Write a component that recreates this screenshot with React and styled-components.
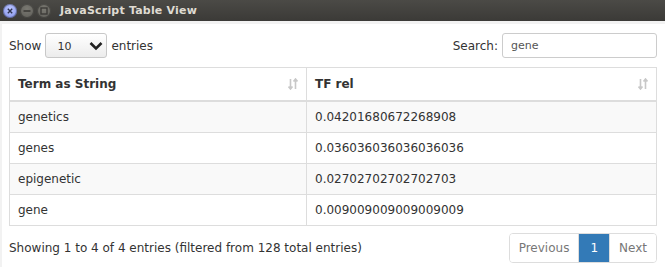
import React from "react";
import styled, { createGlobalStyle } from "styled-components";

const GlobalStyle = createGlobalStyle`
  body {
    margin: 0;
    background: #fff;
    font-family: "DejaVu Sans", "Liberation Sans", sans-serif;
  }
`;

const rows = [
  ["genetics", "0.04201680672268908"],
  ["genes", "0.036036036036036036"],
  ["epigenetic", "0.02702702702702703"],
  ["gene", "0.009009009009009009"],
];

const Window = styled.div`
  width: 665px;
  height: 267px;
  display: flex;
  flex-direction: column;
  overflow: hidden;
`;

const TitleBar = styled.div`
  height: 21px;
  flex-shrink: 0;
  display: flex;
  align-items: center;
  padding-left: 3px;
  gap: 3px;
  background: linear-gradient(#4b4a46, #3b3a37);
`;

const WinButton = styled.span`
  width: 14px;
  height: 14px;
  border-radius: 50%;
  display: flex;
  align-items: center;
  justify-content: center;
  background: ${(p) =>
    p.$close
      ? "radial-gradient(circle at 50% 35%, #bcc6ff, #7d8ce6)"
      : "radial-gradient(circle at 50% 35%, #7a7972, #5c5b56)"};
  box-shadow: inset 0 0 0 1px rgba(0, 0, 0, 0.3);
`;

const Title = styled.span`
  margin-left: 6px;
  color: #dfdbd2;
  font-weight: bold;
  font-size: 11px;
  letter-spacing: 0.2px;
`;

const Content = styled.div`
  flex: 1;
  border-top: 3px solid #f2f2f2;
  border-left: 2px solid #f2f2f2;
  padding: 9px 8px 0 7px;
  color: #333;
  font-size: 12px;
`;

const TopBar = styled.div`
  display: flex;
  justify-content: space-between;
  align-items: center;
  height: 25px;
`;

const Label = styled.label`
  display: flex;
  align-items: center;
  gap: 4px;
`;

const Select = styled.div`
  box-sizing: border-box;
  width: 62px;
  height: 25px;
  border: 1px solid #c8c8c8;
  border-radius: 3px;
  background: linear-gradient(#fff, #ececec);
  display: flex;
  align-items: center;
  justify-content: space-between;
  padding: 1px 3px 0 11px;
  font-size: 11px;
`;

const Input = styled.div`
  width: 155px;
  height: 25px;
  box-sizing: border-box;
  border: 1px solid #ccc;
  border-radius: 3px;
  padding: 0 8px;
  display: flex;
  align-items: center;
  font-size: 11px;
  color: #555;
`;

const Table = styled.table`
  width: 100%;
  margin-top: 9px;
  border-collapse: collapse;
  table-layout: fixed;
  border: 1px solid #ddd;
`;

const Th = styled.th`
  text-align: left;
  font-weight: bold;
  padding: 8px 8px;
  line-height: 16px;
  border: 1px solid #ddd;
  border-bottom: 2px solid #ddd;
`;

const ThInner = styled.div`
  display: flex;
  justify-content: space-between;
  align-items: center;
`;

const Td = styled.td`
  padding: 8px 8px;
  line-height: 14px;
  border: 1px solid #ddd;
`;

const Tr = styled.tr`
  background: ${(p) => (p.$odd ? "#f9f9f9" : "#fff")};
`;

const Footer = styled.div`
  display: flex;
  justify-content: space-between;
  align-items: center;
  margin-top: 7px;
`;

const Pager = styled.div`
  display: flex;
  border: 1px solid #ddd;
  border-radius: 4px;
  overflow: hidden;
`;

const PageBtn = styled.span`
  padding: 0 ${(p) => (p.$active ? "11px" : "9px")};
  height: 28px;
  display: flex;
  align-items: center;
  color: ${(p) => (p.$active ? "#fff" : "#777")};
  background: ${(p) => (p.$active ? "#337ab7" : "#fff")};
  border-left: ${(p) => (p.$first ? "none" : "1px solid #ddd")};
`;

const SortIcon = () => (
  <svg width="10" height="12" viewBox="0 0 10 12">
    <path d="M2.5 1v10M0.5 8.5l2 2.5 2-2.5" stroke="#c8c8c8" strokeWidth="1.6" fill="none" />
    <path d="M7.5 11V1M5.5 3.5l2-2.5 2 2.5" stroke="#c8c8c8" strokeWidth="1.6" fill="none" />
  </svg>
);

const Chevron = () => (
  <svg width="14" height="10" viewBox="0 0 14 10">
    <path d="M1.5 2l5.5 5.5L12.5 2" stroke="#222" strokeWidth="2.6" fill="none" />
  </svg>
);

const CloseGlyph = () => (
  <svg width="6" height="6" viewBox="0 0 6 6">
    <path d="M0.8 0.8l4.4 4.4M5.2 0.8l-4.4 4.4" stroke="#2e3350" strokeWidth="1.4" />
  </svg>
);

const MinGlyph = () => (
  <svg width="8" height="8" viewBox="0 0 8 8">
    <path d="M0.5 4h7" stroke="#3c3b38" strokeWidth="1.6" />
  </svg>
);

const MaxGlyph = () => (
  <svg width="8" height="8" viewBox="0 0 8 8">
    <rect x="1" y="1" width="6" height="6" stroke="#3c3b38" strokeWidth="1.4" fill="none" />
  </svg>
);

export default function App() {
  return (
    <Window>
      <GlobalStyle />
      <TitleBar>
        <WinButton $close>
          <CloseGlyph />
        </WinButton>
        <WinButton>
          <MinGlyph />
        </WinButton>
        <WinButton>
          <MaxGlyph />
        </WinButton>
        <Title>JavaScript Table View</Title>
      </TitleBar>
      <Content>
        <TopBar>
          <Label>
            Show
            <Select>
              10
              <Chevron />
            </Select>
            entries
          </Label>
          <Label>
            Search:
            <Input>gene</Input>
          </Label>
        </TopBar>
        <Table>
          <colgroup>
            <col style={{ width: "297px" }} />
            <col />
          </colgroup>
          <thead>
            <tr>
              <Th>
                <ThInner>
                  Term as String <SortIcon />
                </ThInner>
              </Th>
              <Th>
                <ThInner>
                  TF rel <SortIcon />
                </ThInner>
              </Th>
            </tr>
          </thead>
          <tbody>
            {rows.map((r, i) => (
              <Tr key={r[0]} $odd={i % 2 === 0}>
                <Td>{r[0]}</Td>
                <Td>{r[1]}</Td>
              </Tr>
            ))}
          </tbody>
        </Table>
        <Footer>
          <span>Showing 1 to 4 of 4 entries (filtered from 128 total entries)</span>
          <Pager>
            <PageBtn $first>Previous</PageBtn>
            <PageBtn $active>1</PageBtn>
            <PageBtn>Next</PageBtn>
          </Pager>
        </Footer>
      </Content>
    </Window>
  );
}
